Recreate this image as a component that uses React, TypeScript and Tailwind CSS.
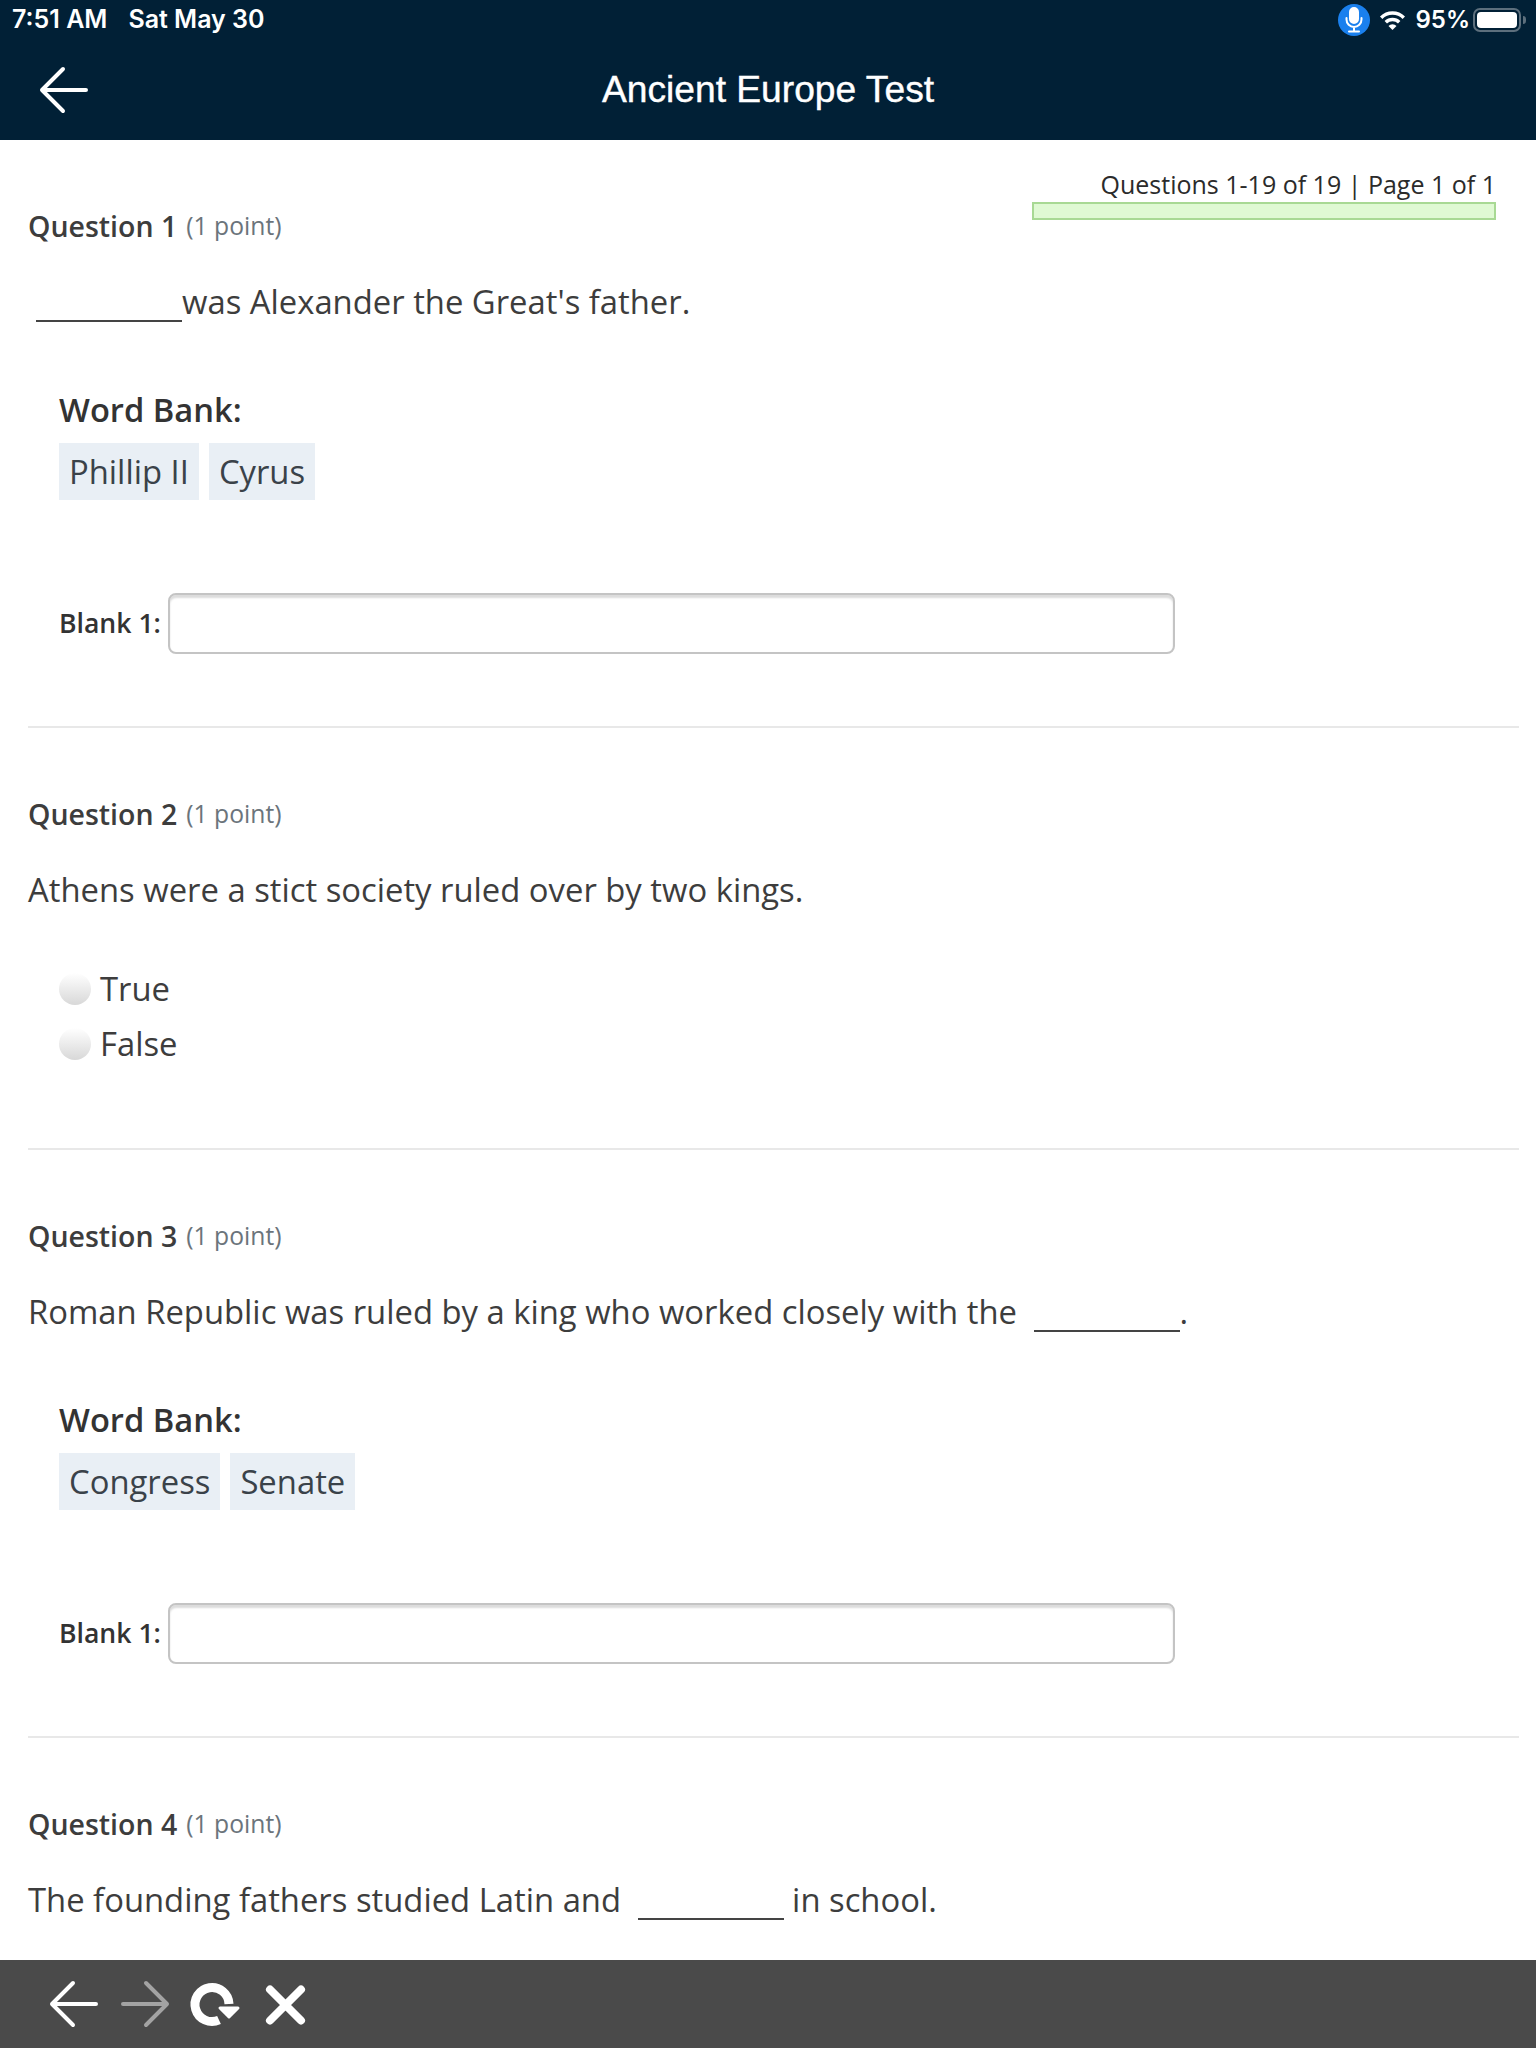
import React from 'react'

const open = "font-['Open_Sans',sans-serif]"
const bodyText = 'h-[44px] text-[32.8px] leading-[44px] text-[#3d3d3d]'

function Blank() {
  return <span className="inline-block h-[2px] w-[146px] translate-y-[8px] bg-[#444]" />
}

function QuestionHead({ n }: { n: number }) {
  return (
    <div className="flex h-[36px] items-center gap-[9px]">
      <span className="text-[28.5px] font-semibold text-[#3d3d3d]">Question {n}</span>
      <span className="text-[24.7px] text-[#6b747b]">(1 point)</span>
    </div>
  )
}

function WordBank({ words }: { words: string[] }) {
  return (
    <div className="mt-[64px] pl-[31px]">
      <div className="flex h-[44px] items-center text-[32.7px] font-semibold text-[#333]">Word Bank:</div>
      <div className="mt-[11px] flex gap-[10px]">
        {words.map((w) => (
          <span key={w} className="flex h-[57px] items-center bg-[#e9eff5] px-[10px] text-[32.8px] text-[#3a4249]">
            {w}
          </span>
        ))}
      </div>
    </div>
  )
}

function BlankInput() {
  return (
    <div className="mt-[93px] flex items-center pl-[31px]">
      <span className="w-[109px] text-[26.6px] font-semibold text-[#333]">Blank 1:</span>
      <div className="h-[61px] w-[1007px] rounded-[8px] border-2 border-[#c4c4c4] shadow-[inset_0_3px_2px_#dcdcdc]" />
    </div>
  )
}

function Radio({ label }: { label: string }) {
  return (
    <div className="flex h-[55px] items-center gap-[9px]">
      <span className="h-[32px] w-[32px] rounded-full bg-gradient-to-b from-white to-[#d8d8d8]" />
      <span className="text-[32.8px] text-[#3d3d3d]">{label}</span>
    </div>
  )
}

export default function App() {
  return (
    <div className={`flex h-[2048px] w-[1536px] flex-col overflow-hidden bg-white ${open}`}>
      <header className="h-[140px] shrink-0 bg-[#012036] font-['Inter',sans-serif] text-white">
        <div className="flex h-[40px] items-center justify-between pl-[12px] pr-[10px] text-[25px] font-semibold">
          <div className="flex gap-[21px]">
            <span>7:51 AM</span>
            <span>Sat May 30</span>
          </div>
          <div className="flex items-center">
            <span className="flex h-[32px] w-[32px] items-center justify-center rounded-full bg-[#1a80ee]">
              <svg width="20" height="26" viewBox="0 0 20 26" fill="none" stroke="white" strokeWidth="2" strokeLinecap="round">
                <rect x="6" y="1" width="8" height="15" rx="4" fill="white" />
                <path d="M2.5 11V12.5A7.5 7.5 0 0 0 17.5 12.5V11M10 20V24M5 24.5H15" />
              </svg>
            </span>
            <svg className="ml-[9px]" width="27" height="21" viewBox="0 0 27 21" fill="none" stroke="white" strokeWidth="3.4">
              <path d="M2.2 7.7A16 16 0 0 1 24.8 7.7M6.8 12.3A9.5 9.5 0 0 1 20.2 12.3" />
              <path d="M13.5 20L9.5 16A5.66 5.66 0 0 1 17.5 16Z" fill="white" stroke="none" />
            </svg>
            <span className="ml-[9px] text-[24px]">95%</span>
            <span className="ml-[3px] flex h-[24px] w-[48px] items-center rounded-[7px] border-2 border-[#5d6f7d] p-[2px]">
              <span className="h-full w-full rounded-[4px] bg-white" />
            </span>
            <span className="ml-[2px] h-[8px] w-[3px] rounded-r bg-[#5d6f7d]" />
          </div>
        </div>
        <div className="relative flex h-[100px] items-center justify-center">
          <svg className="absolute left-[36px] top-[25px]" width="56" height="50" viewBox="0 0 56 50" fill="none" stroke="white" strokeWidth="4" strokeLinecap="round" strokeLinejoin="round">
            <path d="M6 25H50M27 4L6 25L27 46" />
          </svg>
          <h1 className="font-['Liberation_Sans',sans-serif] text-[37.2px] leading-none text-white [-webkit-text-stroke:0.4px_white]">Ancient Europe Test</h1>
        </div>
      </header>

      <main className="min-h-0 flex-1 overflow-hidden pl-[28px] pr-[17px] pt-[28px]">
        <div className="float-right mr-[23px] w-[464px]">
          <div className="h-[34px] text-right text-[25px] font-medium leading-[32px] text-[#2b2b2b]">Questions 1-19 of 19 | Page 1 of 1</div>
          <div className="h-[18px] border-2 border-[#a8d994] bg-[#dff9d3]" />
        </div>

        <section className="h-[560px] border-b-2 border-[#e8e8e8] pt-[40px]">
          <QuestionHead n={1} />
          <div className={`mt-[36px] ${bodyText}`}>
            <span className="ml-[8px]" />
            <Blank />was Alexander the Great's father.
          </div>
          <WordBank words={['Phillip II', 'Cyrus']} />
          <BlankInput />
        </section>

        <section className="h-[422px] border-b-2 border-[#e8e8e8] pt-[68px]">
          <QuestionHead n={2} />
          <div className={`mt-[36px] ${bodyText}`}>Athens were a stict society ruled over by two kings.</div>
          <div className="mt-[49px] pl-[31px]">
            <Radio label="True" />
            <Radio label="False" />
          </div>
        </section>

        <section className="h-[588px] border-b-2 border-[#e8e8e8] pt-[68px]">
          <QuestionHead n={3} />
          <div className={`mt-[36px] ${bodyText}`}>
            Roman Republic was ruled by a king who worked closely with the <span className="ml-[8px]" /><Blank />.
          </div>
          <WordBank words={['Congress', 'Senate']} />
          <BlankInput />
        </section>

        <section className="pt-[68px]">
          <QuestionHead n={4} />
          <div className={`mt-[36px] ${bodyText}`}>
            The founding fathers studied Latin and <span className="ml-[8px]" /><Blank /> in school.
          </div>
        </section>
      </main>

      <footer className="flex h-[88px] shrink-0 items-center bg-[#4a4a4a]">
        <svg width="340" height="88" viewBox="0 0 340 88" fill="none" strokeLinecap="round" strokeLinejoin="round">
          <path d="M52 44H96M73 23L52 44L73 65" stroke="white" strokeWidth="4" />
          <path d="M123 44H167M146 23L167 44L146 65" stroke="#a3a3a3" strokeWidth="4" />
          <path d="M219 60A17 17 0 1 1 229 44" stroke="white" strokeWidth="9" strokeLinecap="butt" />
          <path d="M220 48H238L229 57Z" fill="white" stroke="white" strokeWidth="3" />
          <path d="M270 29.5L301 60.5M301 29.5L270 60.5" stroke="white" strokeWidth="8" />
        </svg>
      </footer>
    </div>
  )
}
